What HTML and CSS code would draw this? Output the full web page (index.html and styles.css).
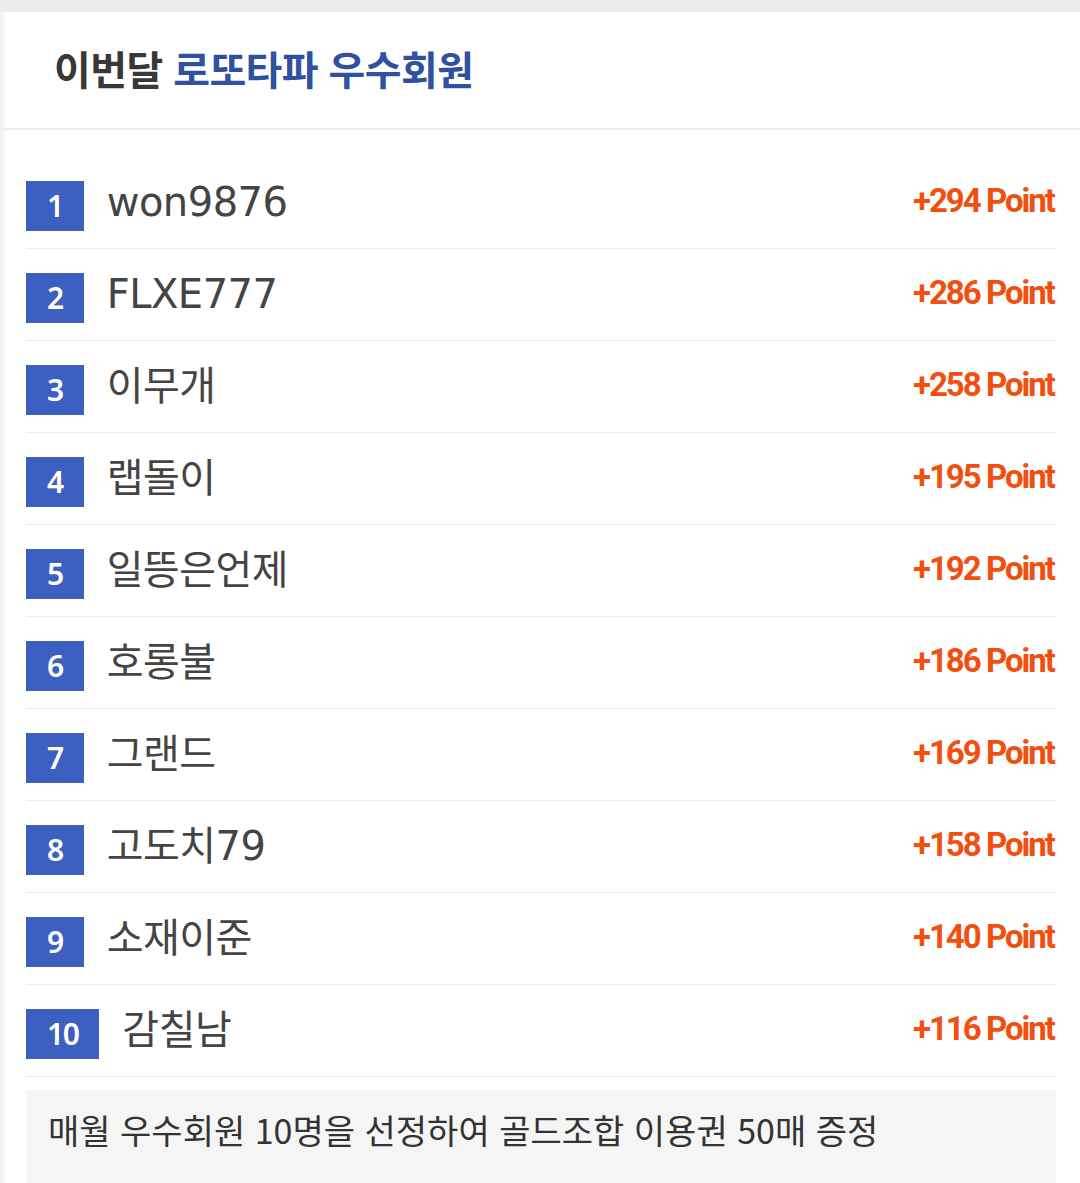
FILE: index.html
```html
<!DOCTYPE html>
<html lang="ko">
<head>
<meta charset="utf-8">
<title>이번달 로또타파 우수회원</title>
<link rel="stylesheet" href="styles.css">
</head>
<body>
<div class="page">
  <section class="card">
    <header class="head">
      <h2 class="title"><span class="dark">이번달</span> <span class="blue">로또타파 우수회원</span></h2>
    </header>
    <ol class="rank">
      <li class="row"><span class="badge">1</span><span class="name">won9876</span><span class="pts">+294 Point</span></li>
      <li class="row"><span class="badge">2</span><span class="name">FLXE777</span><span class="pts">+286 Point</span></li>
      <li class="row"><span class="badge">3</span><span class="name">이무개</span><span class="pts">+258 Point</span></li>
      <li class="row"><span class="badge">4</span><span class="name">랩돌이</span><span class="pts">+195 Point</span></li>
      <li class="row"><span class="badge">5</span><span class="name">일뜽은언제</span><span class="pts">+192 Point</span></li>
      <li class="row"><span class="badge">6</span><span class="name">호롱불</span><span class="pts">+186 Point</span></li>
      <li class="row"><span class="badge">7</span><span class="name">그랜드</span><span class="pts">+169 Point</span></li>
      <li class="row"><span class="badge">8</span><span class="name">고도치79</span><span class="pts">+158 Point</span></li>
      <li class="row"><span class="badge">9</span><span class="name">소재이준</span><span class="pts">+140 Point</span></li>
      <li class="row"><span class="badge">10</span><span class="name">감칠남</span><span class="pts">+116 Point</span></li>
    </ol>
    <p class="note">매월 우수회원 10명을 선정하여 골드조합 이용권 50매 증정</p>
  </section>
</div>
</body>
</html>
```
FILE: styles.css
```css
html, body {
  margin: 0;
  padding: 0;
  background: #ebebeb;
  height: 100%;
  overflow: hidden;
}
body {
  font-family: "Noto Sans CJK KR", "Noto Sans", sans-serif;
}
.page {
  padding-top: 12px;
  min-height: 100%;
  box-sizing: border-box;
}
.card {
  background: linear-gradient(to right, #f1f1f1 0, #ffffff 7px);
  min-height: 1171px;
}
.head {
  height: 116px;
  display: flex;
  align-items: center;
  padding-left: 54px;
  border-bottom: 2px solid #efefef;
}
.title {
  margin: 0 0 4px;
  font-size: 40px;
  font-weight: 700;
  letter-spacing: -0.6px;
  line-height: 1;
}
.dark { color: #383838; }
.blue { color: #2f519f; }
.rank {
  list-style: none;
  margin: 0;
  padding: 27px 24px 0 26px;
}
.row {
  display: flex;
  align-items: center;
  padding: 24px 0 17px;
  border-bottom: 1px solid #ececec;
}
.badge {
  height: 50px;
  padding: 0 21px;
  box-sizing: border-box;
  background: #3d5fc2;
  color: #fff;
  font-family: "Noto Sans", sans-serif;
  font-weight: 600;
  font-size: 30px;
  line-height: 50px;
  text-align: center;
  letter-spacing: -1.5px;
}
.name {
  margin-left: 23px;
  font-family: "DejaVu Sans", "Noto Sans CJK KR", sans-serif;
  font-size: 40px;
  color: #444;
  line-height: 1;
  flex: 1;
  margin-top: -8px;
  letter-spacing: -0.5px;
}
.pts {
  font-family: Roboto, "Noto Sans", sans-serif;
  font-weight: 700;
  font-size: 33px;
  color: #f04f0f;
  letter-spacing: -2px;
  line-height: 1;
  margin-top: -12px;
  padding-right: 2px;
}
.note {
  margin: 13px 24px 0 26px;
  background: #f5f5f5;
  padding: 21px 22px 40px;
  font-size: 34px;
  color: #333;
  line-height: 1.1;
  letter-spacing: 0;
}
```
